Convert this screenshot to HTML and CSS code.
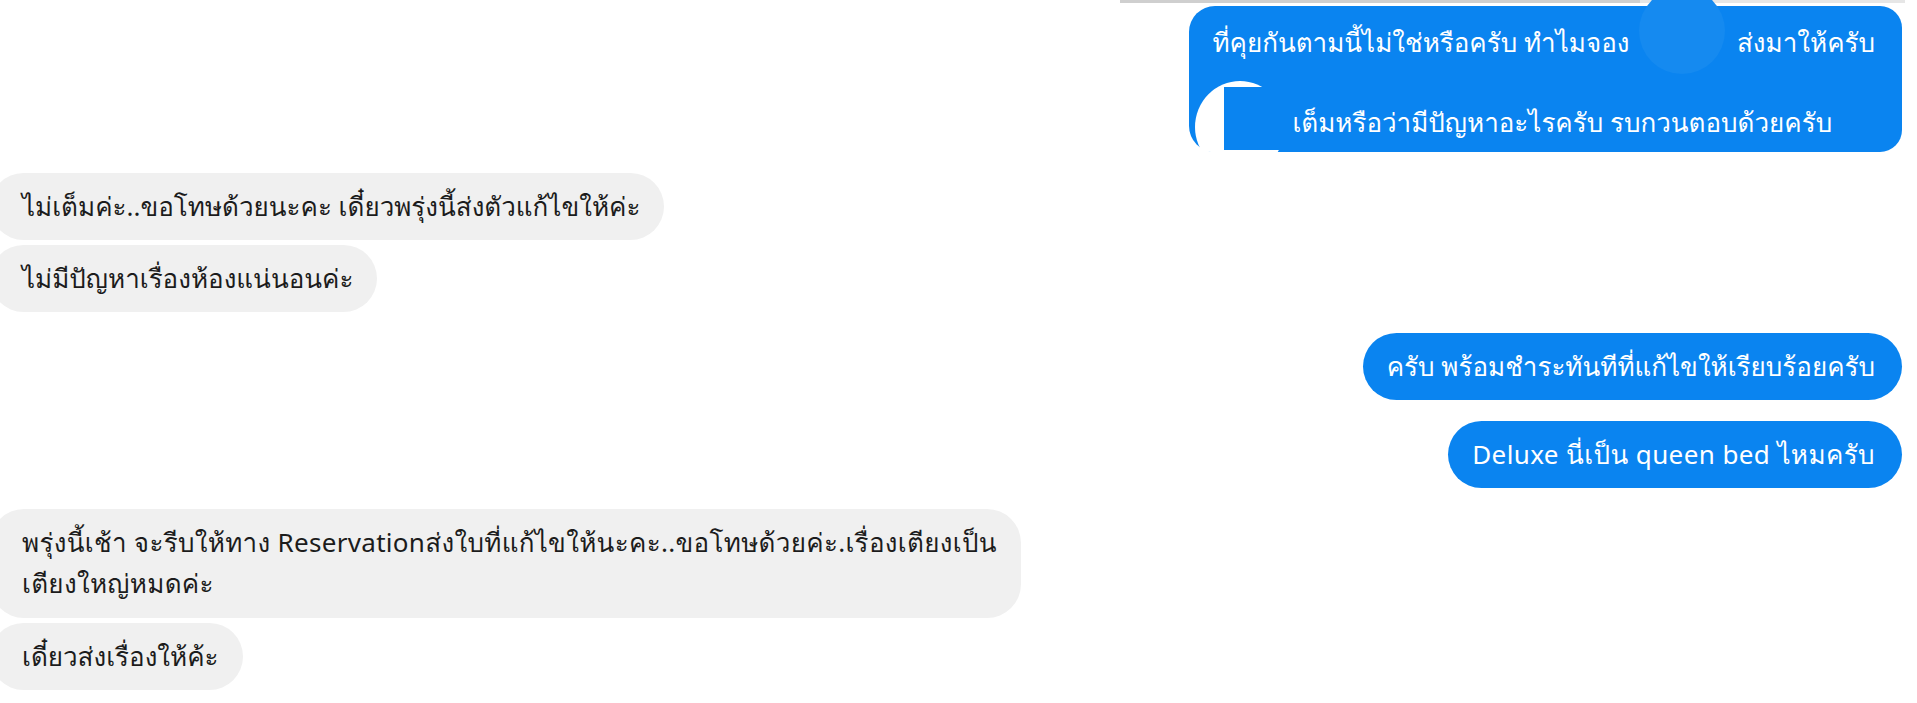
FILE: index.html
```html
<!DOCTYPE html>
<html lang="th">
<head>
<meta charset="utf-8">
<title>Chat</title>
<link rel="stylesheet" href="styles.css">
</head>
<body>
<div class="chat">
  <div class="prev-edge"></div>

  <div class="row out first">
    <div class="bubble out tall">
      <span class="line">ที่คุยกันตามนี้ไม่ใช่หรือครับ ทำไมจอง <span class="gap"></span> ส่งมาให้ครับ</span>
      <span class="line second">เต็มหรือว่ามีปัญหาอะไรครับ รบกวนตอบด้วยครับ</span>
      <div class="mask-low"><div class="blot-white"></div><div class="blot-blue"></div></div>
      <div class="blot-circle"></div>
    </div>
  </div>

  <div class="row in group">
    <div class="bubble in">ไม่เต็มค่ะ..ขอโทษด้วยนะคะ เดี๋ยวพรุ่งนี้ส่งตัวแก้ไขให้ค่ะ</div>
  </div>
  <div class="row in">
    <div class="bubble in">ไม่มีปัญหาเรื่องห้องแน่นอนค่ะ</div>
  </div>

  <div class="row out group">
    <div class="bubble out">ครับ พร้อมชำระทันทีที่แก้ไขให้เรียบร้อยครับ</div>
  </div>
  <div class="row out group-s">
    <div class="bubble out spaced">Deluxe นี่เป็น queen bed ไหมครับ</div>
  </div>

  <div class="row in group">
    <div class="bubble in multi">พรุ่งนี้เช้า จะรีบให้ทาง Reservationส่งใบที่แก้ไขให้นะคะ..ขอโทษด้วยค่ะ.เรื่องเตียงเป็น<br>เตียงใหญ่หมดค่ะ</div>
  </div>
  <div class="row in">
    <div class="bubble in">เดี๋ยวส่งเรื่องให้ค้ะ</div>
  </div>
</div>
</body>
</html>
```

FILE: styles.css
```css
html, body {
  margin: 0;
  padding: 0;
  background: #ffffff;
  overflow: hidden;
}

.chat {
  width: 1917px;
  height: 703px;
  font-family: "Noto Sans", "Loma", "Liberation Sans", sans-serif;
  font-size: 26px;
  line-height: 40px;
  position: relative;
}

.prev-edge {
  height: 3px;
  margin-left: 1120px;
  margin-right: 12px;
  background: linear-gradient(to right, #cfcfcf 0, #cfcfcf 520px, #e6e6e6 520px, #e6e6e6 100%);
}

.row {
  display: flex;
  margin-top: 5px;
}
.row.first { margin-top: 3px; padding-right: 13px; }
.row.group { margin-top: 21px; }
.row.group-s { margin-top: 21px; }
.row.out { justify-content: flex-end; padding-right: 15px; }
.row.in { justify-content: flex-start; }

.bubble {
  padding: 13px 27px 14px 24px;
  border-radius: 34px;
  white-space: nowrap;
}

.bubble.out {
  background: #0a84f0;
  color: #ffffff;
}

.bubble.spaced {
  letter-spacing: 0.4px;
}

.bubble.in {
  background: #f0f0f0;
  color: #1c1c1c;
  margin-left: -10px;
  padding-left: 32px;
  padding-right: 24px;
}

.bubble.multi {
  line-height: 41px;
  letter-spacing: 0.3px;
}

.bubble.tall {
  position: relative;
  padding: 16px 27px 10px 23px;
  border-radius: 26px 22px 22px 26px;
}

.line { display: block; }
.line.second { margin-top: 40px; padding-left: 80px; }
.gap { display: inline-block; width: 94px; }

.mask-low {
  position: absolute;
  left: 0;
  top: 75px;
  bottom: 0;
  width: 120px;
  overflow: hidden;
  border-bottom-left-radius: 22px;
}
.blot-white {
  position: absolute;
  left: 6px;
  top: 0;
  width: 90px;
  height: 92px;
  border-radius: 50%;
  background: #ffffff;
}
.blot-blue {
  position: absolute;
  left: 35px;
  top: 6px;
  width: 66px;
  height: 63px;
  background: #0a84f0;
}
.blot-circle {
  position: absolute;
  left: 450px;
  top: -18px;
  width: 86px;
  height: 86px;
  border-radius: 50%;
  background: #158af0;
}
```
